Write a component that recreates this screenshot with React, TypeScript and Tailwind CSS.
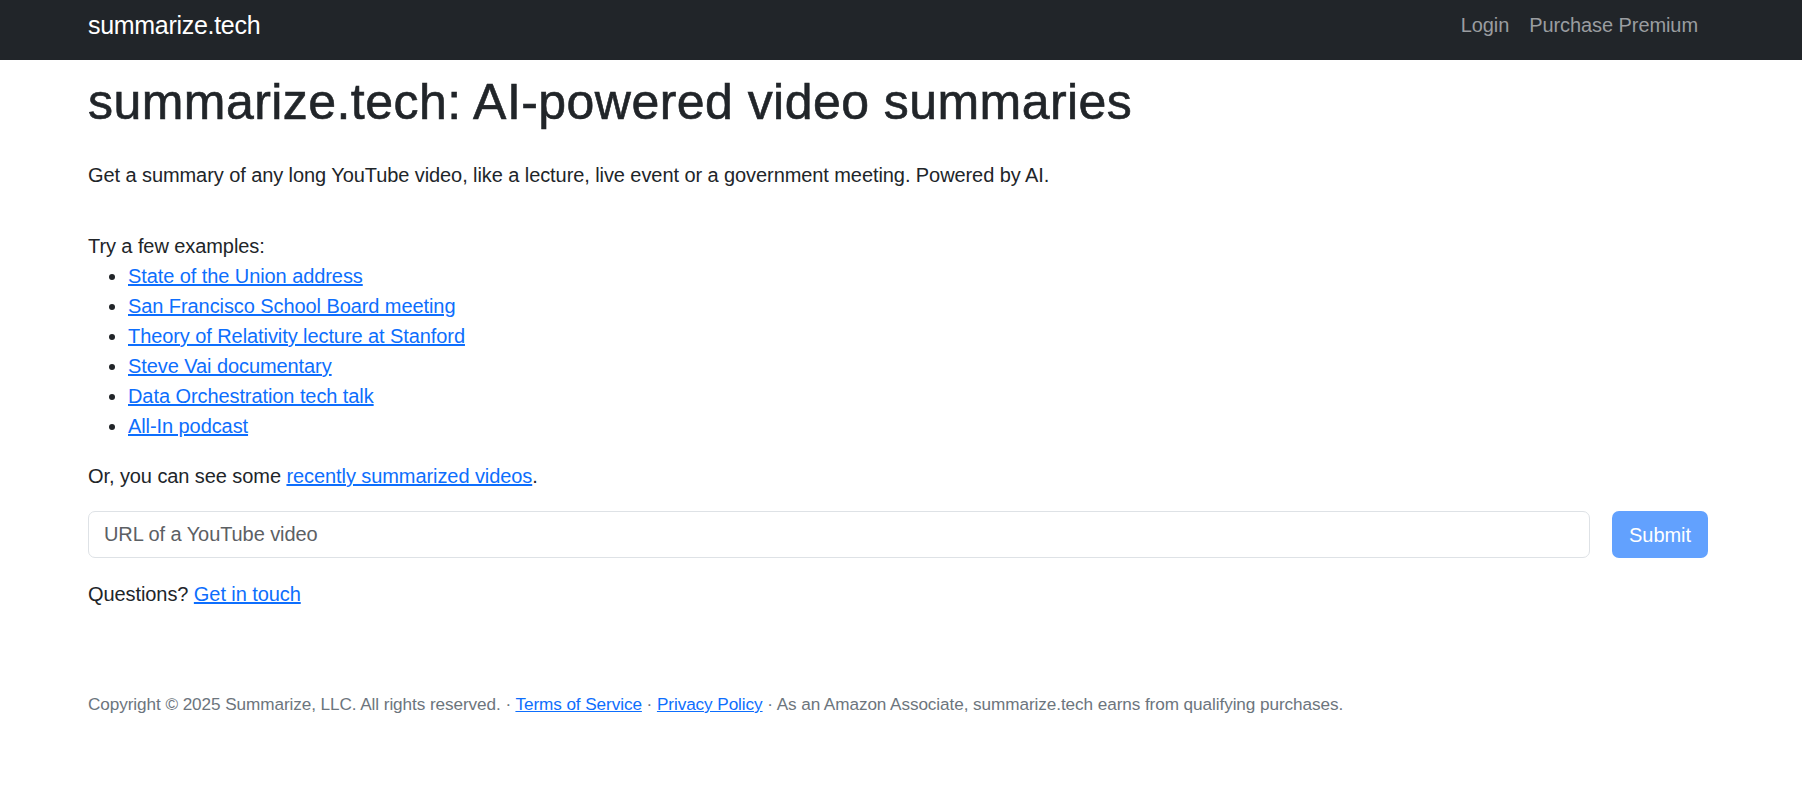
const examples = [
  "State of the Union address",
  "San Francisco School Board meeting",
  "Theory of Relativity lecture at Stanford",
  "Steve Vai documentary",
  "Data Orchestration tech talk",
  "All-In podcast",
];

const font = "font-['Liberation_Sans',Arial,sans-serif]";

export default function App() {
  return (
    <div className={`min-h-[803px] bg-white text-[20px] leading-[30px] tracking-[-0.08px] text-[#212529] ${font}`}>
      <nav className="h-[60px] bg-[#212529] pb-[10px]">
        <div className="ml-[88px] flex h-full w-[1620px] items-center justify-between">
          <a href="#" className="text-[25px] tracking-[-0.3px] text-white">
            summarize.tech
          </a>
          <div className="flex items-center text-[#9a9da0]">
            <a href="#" className="px-[10px]">
              Login
            </a>
            <a href="#" className="px-[10px]">
              Purchase Premium
            </a>
          </div>
        </div>
      </nav>

      <main className="ml-[88px] w-[1620px] pt-[12px]">
        <h1 className="text-[50px] leading-[60px] font-medium tracking-[0.45px] [-webkit-text-stroke:0.6px_#212529]">
          summarize.tech: AI-powered video summaries
        </h1>

        <p className="mt-[28px]">
          Get a summary of any long YouTube video, like a lecture, live event or a government meeting. Powered by AI.
        </p>

        <div className="mt-[41px]">
          <div>Try a few examples:</div>
          <ul className="list-disc pl-[40px]">
            {examples.map((ex) => (
              <li key={ex}>
                <a href="#" className="text-[#0d6efd] underline">
                  {ex}
                </a>
              </li>
            ))}
          </ul>
        </div>

        <p className="mt-[20px]">
          Or, you can see some{" "}
          <a href="#" className="text-[#0d6efd] underline">
            recently summarized videos
          </a>
          .
        </p>

        <form className="mt-[20px] flex items-center gap-[22px]" onSubmit={(e) => e.preventDefault()}>
          <input
            type="text"
            placeholder="URL of a YouTube video"
            className="h-[47px] flex-1 rounded-[7px] border border-[#dee2e6] bg-white px-[15px] text-[20px] text-[#212529] outline-none placeholder:text-[#5c6064]"
          />
          <button
            type="submit"
            disabled
            className="h-[47px] w-[96px] rounded-[7px] bg-[#62a1fe] text-[20px] text-white"
          >
            Submit
          </button>
        </form>

        <p className="mt-[21px]">
          Questions?{" "}
          <a href="#" className="text-[#0d6efd] underline">
            Get in touch
          </a>
        </p>

        <footer className="mt-[82px] text-[17.17px] leading-[26px] text-[#6c757d]">
          Copyright © 2025 Summarize, LLC. All rights reserved. ·{" "}
          <a href="#" className="text-[#0d6efd] underline">
            Terms of Service
          </a>{" "}
          ·{" "}
          <a href="#" className="text-[#0d6efd] underline">
            Privacy Policy
          </a>{" "}
          · As an Amazon Associate, summarize.tech earns from qualifying purchases.
        </footer>
      </main>
    </div>
  );
}
